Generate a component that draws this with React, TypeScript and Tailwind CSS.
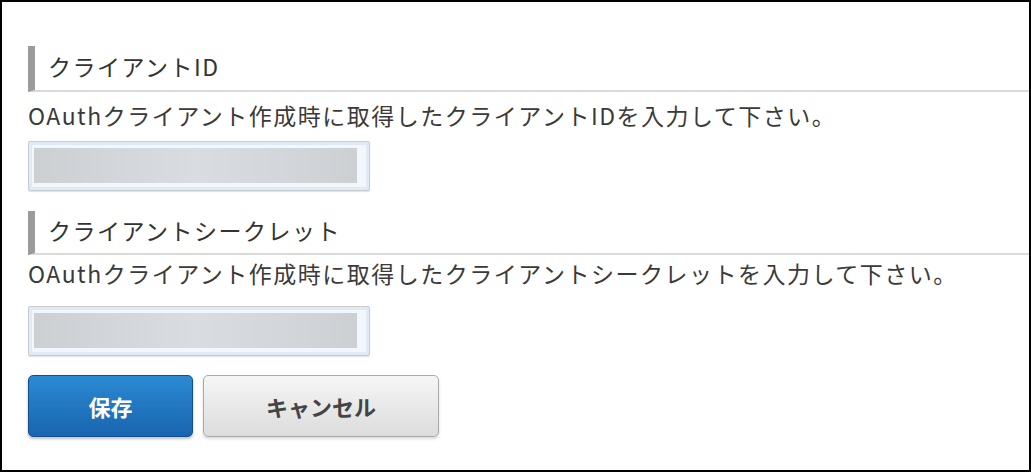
import React from 'react';

interface Field {
    label: string;
    help: string;
}

const fields: Field[] = [
    {
        label: 'クライアントID',
        help: 'OAuthクライアント作成時に取得したクライアントIDを入力して下さい。',
    },
    {
        label: 'クライアントシークレット',
        help: 'OAuthクライアント作成時に取得したクライアントシークレットを入力して下さい。',
    },
];

const SectionTitle: React.FC<{ label: string; className?: string }> = ({ label, className }) => (
    <div
        className={`flex items-center border-l-[7px] border-l-[#9b9b9b] border-b-2 border-b-[#ddd9d6] pl-[13px] pb-[4px] text-[23px] tracking-[1.5px] text-[#333] ${className ?? ''}`}
    >
        {label}
    </div>
);

// redacted value, shown as a blurred gray strip
const MaskedInput: React.FC<{ className?: string }> = ({ className }) => (
    <div
        className={`w-[342px] h-[50px] rounded-[2px] border border-[#c9cccf] bg-[#f1f7fd] pl-[5px] pr-[12px] pt-[6px] pb-[7px] shadow-[inset_0_0_0_3px_#dfeaf5,0_1px_1px_rgba(0,0,0,0.12)] ${className ?? ''}`}
    >
        <div className="h-full w-full bg-gradient-to-r from-[#ccd0d3] via-[#d9dde2] to-[#cdd0d3]" />
    </div>
);

export default function App() {
    return (
        <div
            className="w-[1031px] h-[472px] border-2 border-black bg-white pl-[26px] pt-[44px] text-[#333]"
            style={{ fontFamily: '"Noto Sans CJK JP", "Noto Sans", sans-serif' }}
        >
            {/* クライアントID */}
            <SectionTitle label={fields[0].label} className="h-[46px]" />
            <p className="mt-[8px] h-[30px] leading-[30px] text-[23px] tracking-[1.5px] text-[#3a3a3a] whitespace-nowrap">
                {fields[0].help}
            </p>
            <MaskedInput className="mt-[11px]" />

            {/* クライアントシークレット */}
            <SectionTitle label={fields[1].label} className="mt-[20px] h-[44px]" />
            <p className="mt-[3px] h-[30px] leading-[30px] text-[23px] tracking-[1.5px] text-[#3a3a3a] whitespace-nowrap">
                {fields[1].help}
            </p>
            <MaskedInput className="mt-[18px]" />

            <div className="mt-[19px] flex gap-[10px]">
                <button
                    type="button"
                    className="w-[165px] h-[62px] rounded-[5px] border border-[#134f8e] bg-gradient-to-b from-[#2b8ad3] to-[#1865ae] text-white text-[22px] font-bold shadow-[0_2px_3px_rgba(0,0,0,0.25)]"
                >
                    保存
                </button>
                <button
                    type="button"
                    className="w-[236px] h-[62px] rounded-[5px] border border-[#a9a9a9] bg-gradient-to-b from-[#f6f6f6] to-[#dcdcdc] text-[#444] text-[22px] font-bold shadow-[0_2px_3px_rgba(0,0,0,0.15)]"
                >
                    キャンセル
                </button>
            </div>
        </div>
    );
}
